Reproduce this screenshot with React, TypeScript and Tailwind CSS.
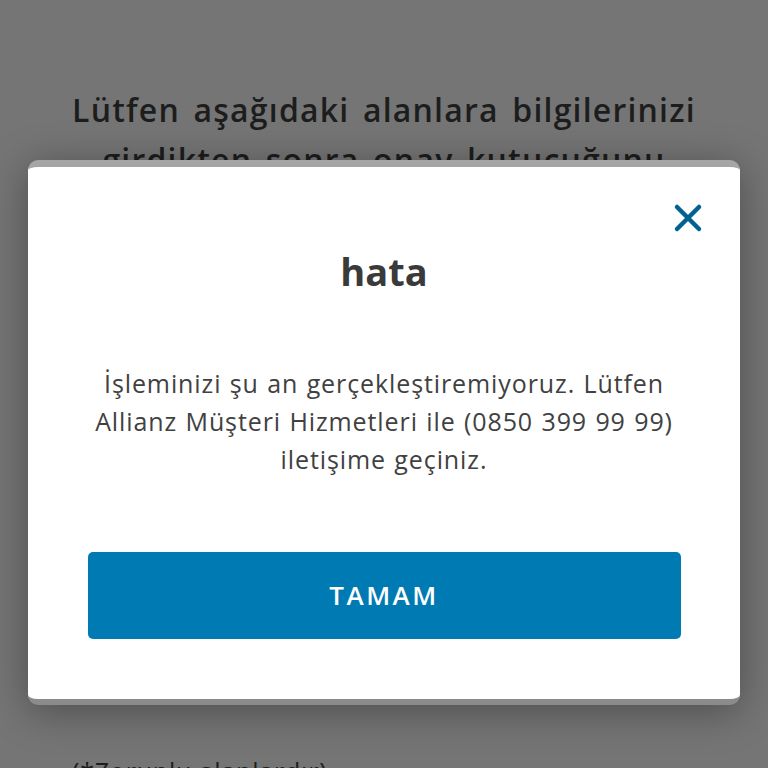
import React from "react";

const CloseIcon = () => (
  <svg width="30" height="30" viewBox="0 0 30 30" fill="none">
    <path
      d="M4 4L26 26M26 4L4 26"
      stroke="#006192"
      strokeWidth="4.5"
      strokeLinecap="round"
    />
  </svg>
);

const ErrorModal: React.FC<{ onClose?: () => void }> = ({ onClose }) => (
  <div className="absolute left-[28px] top-[160px] w-[712px] rounded-[10px] border-t-[7px] border-b-[6px] border-t-[#a5a5a5] border-b-[#8b8b8b] bg-white shadow-[0_6px_40px_rgba(0,0,0,0.35)]">
    <div className="relative flex flex-col items-center px-[40px] pt-[80px] pb-[60px]">
      <button
        onClick={onClose}
        className="absolute right-[37px] top-[36px] flex h-[30px] w-[30px] items-center justify-center"
      >
        <CloseIcon />
      </button>
      <h2 className="text-[38px] font-bold leading-[48px] text-[#3a3a3a]">
        hata
      </h2>
      <p className="mt-[69px] text-center text-[25px] leading-[38px] tracking-[0.9px] [word-spacing:1px] text-[#414141]">
        İşleminizi şu an gerçekleştiremiyoruz. Lütfen
        <br />
        Allianz Müşteri Hizmetleri ile (0850 399 99 99)
        <br />
        iletişime geçiniz.
      </p>
      <button
        onClick={onClose}
        className="mx-[19px] mt-[74px] flex h-[87px] w-[593px] items-center justify-center rounded-[5px] bg-[#007ab3] text-[26px] font-semibold tracking-[2.5px] text-white"
      >
        TAMAM
      </button>
    </div>
  </div>
);

export default function App() {
  return (
    <div
      className="relative h-[768px] w-[768px] overflow-hidden bg-[#757575]"
      style={{ fontFamily: "'Open Sans', 'Noto Sans', sans-serif" }}
    >
      <div className="px-[20px] pt-[85px] text-center text-[32px] font-semibold leading-[50px] tracking-[1.2px] [word-spacing:4px] text-[#1d1d1d]">
        Lütfen aşağıdaki alanlara bilgilerinizi
        <br />
        girdikten sonra onay kutucuğunu
        <br />
        işaretleyiniz.
      </div>
      <div className="mt-[517px] px-[72px] text-[25px] leading-[38px] tracking-[0.8px] text-[#1d1d1d]">
        (*Zorunlu alanlardır)
      </div>
      <ErrorModal />
    </div>
  );
}
